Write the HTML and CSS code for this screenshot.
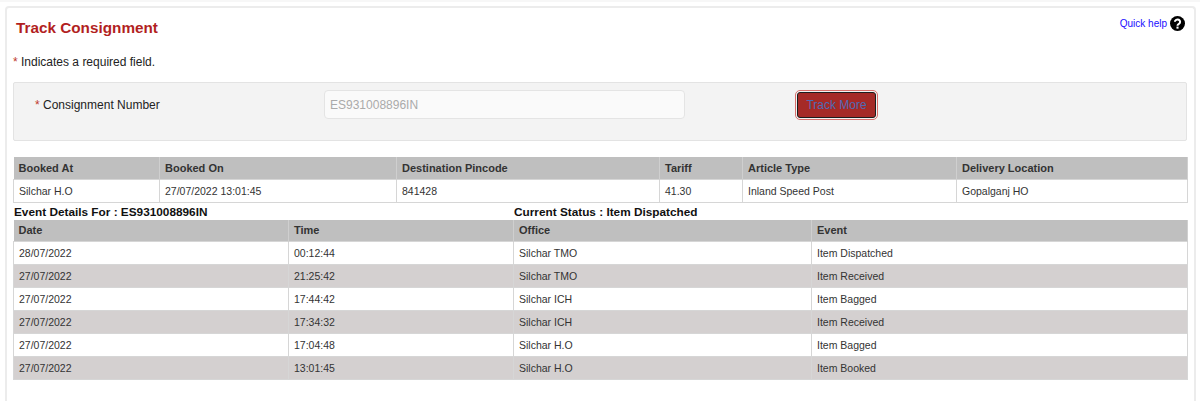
FILE: index.html
```html
<!DOCTYPE html>
<html lang="en">

<head>
  <meta charset="UTF-8">
  <title>Track Consignment</title>
  <link rel="stylesheet" href="styles.css">
</head>

<body>

  <div class="panel">
    <!-- Title and help link -->
    <div class="panel-head">
      <h1>Track Consignment</h1>
      <a class="help-link" href="#">Quick help
        <svg class="help-icon" width="15" height="15" viewBox="0 0 16 16">
          <circle cx="8" cy="8" r="8" fill="#000"></circle>
          <path d="M5.2 6.2a2.8 2.5 0 1 1 4.3 2.1c-1 .6-1.5 1-1.5 2.1" fill="none" stroke="#fff" stroke-width="2.1"></path>
          <rect x="6.9" y="11.3" width="2.2" height="2.2" fill="#fff"></rect>
        </svg>
      </a>
    </div>

    <p class="required-note"><span class="star">*</span> Indicates a required field.</p>

    <!-- Search form -->
    <div class="search-box">
      <label class="search-label" for="consignment"><span class="star">*</span> Consignment Number</label>
      <input class="search-input" id="consignment" type="text" value="ES931008896IN" disabled>
      <button class="track-btn">Track More</button>
    </div>

    <!-- Booking details -->
    <table class="data-table booking-table">
      <tr>
        <th>Booked At</th>
        <th>Booked On</th>
        <th>Destination Pincode</th>
        <th>Tariff</th>
        <th>Article Type</th>
        <th>Delivery Location</th>
      </tr>
      <tr>
        <td>Silchar H.O</td>
        <td>27/07/2022 13:01:45</td>
        <td>841428</td>
        <td>41.30</td>
        <td>Inland Speed Post</td>
        <td>Gopalganj HO</td>
      </tr>
    </table>

    <div class="event-title">
      <span class="event-for">Event Details For : ES931008896IN</span>
      <span>Current Status : Item Dispatched</span>
    </div>

    <!-- Event history -->
    <table class="data-table event-table">
      <tr>
        <th>Date</th>
        <th>Time</th>
        <th>Office</th>
        <th>Event</th>
      </tr>
      <tr>
        <td>28/07/2022</td>
        <td>00:12:44</td>
        <td>Silchar TMO</td>
        <td>Item Dispatched</td>
      </tr>
      <tr>
        <td>27/07/2022</td>
        <td>21:25:42</td>
        <td>Silchar TMO</td>
        <td>Item Received</td>
      </tr>
      <tr>
        <td>27/07/2022</td>
        <td>17:44:42</td>
        <td>Silchar ICH</td>
        <td>Item Bagged</td>
      </tr>
      <tr>
        <td>27/07/2022</td>
        <td>17:34:32</td>
        <td>Silchar ICH</td>
        <td>Item Received</td>
      </tr>
      <tr>
        <td>27/07/2022</td>
        <td>17:04:48</td>
        <td>Silchar H.O</td>
        <td>Item Bagged</td>
      </tr>
      <tr>
        <td>27/07/2022</td>
        <td>13:01:45</td>
        <td>Silchar H.O</td>
        <td>Item Booked</td>
      </tr>
    </table>
  </div>

</body>

</html>
```

FILE: styles.css
```css
* {
  margin: 0;
  padding: 0;
  box-sizing: border-box;
}

body {
  font-family: 'Liberation Sans', Arial, sans-serif;
  background-color: #fff;
  color: #222;
  height: 401px;
  overflow: hidden;
  border-top: 2px solid #f7f7f7;
  padding: 4px 4px 0 5px;
}

/* Outer panel */
.panel {
  border: 2px solid #ececec;
  border-bottom: none;
  border-radius: 4px 4px 0 0;
  height: 395px;
  padding: 0 7px 0 6px;
}

.panel-head {
  display: flex;
  justify-content: space-between;
  height: 38px;
  padding-left: 3px;
}

.panel-head h1 {
  font-size: 15.3px;
  line-height: 19px;
  margin-top: 10px;
  color: #b21f1f;
}

.help-link {
  display: flex;
  align-items: center;
  gap: 3px;
  height: 15px;
  margin: 8px 2px 0 0;
  font-size: 10px;
  color: #1a0dff;
  text-decoration: none;
}

.required-note {
  font-size: 12px;
  line-height: 14px;
  margin-top: 9px;
  color: #222;
}

.star {
  color: #c0392b;
}

/* Search form */
.search-box {
  display: flex;
  align-items: flex-start;
  height: 59px;
  margin-top: 13px;
  padding-top: 7px;
  background-color: #f3f3f3;
  border: 1px solid #e3e3e3;
  border-radius: 2px;
}

.search-label {
  width: 310px;
  padding: 8px 0 0 21px;
  font-size: 12px;
  line-height: 14px;
}

.search-input {
  width: 361px;
  height: 29px;
  padding: 0 5px;
  font-family: inherit;
  font-size: 12px;
  color: #aaa;
  background-color: #fafafa;
  border: 1px solid #e4e4e4;
  border-radius: 4px;
}

.track-btn {
  width: 79px;
  height: 26px;
  margin: 2px 0 0 112px;
  font-family: inherit;
  font-size: 12px;
  color: #4f6bb5;
  background-color: #a52a27;
  border: 1px solid #1c1c1c;
  border-radius: 3px;
  outline: 1px solid #d9706c;
  outline-offset: 1px;
}

/* Tables */
.data-table {
  width: 1175px;
  border-collapse: collapse;
  table-layout: fixed;
  font-size: 10.5px;
}

.data-table th {
  height: 22px;
  padding: 0 5px;
  font-size: 11px;
  text-align: left;
  color: #333;
  background-color: #bfbfbf;
  border-right: 1px solid #cfcfcf;
}

.data-table td {
  height: 23px;
  padding: 0 5px;
  color: #333;
  border: 1px solid #d6d6d6;
}

.booking-table {
  margin-top: 16px;
}

.booking-table th:nth-child(1) { width: 146px; }
.booking-table th:nth-child(2) { width: 237px; }
.booking-table th:nth-child(3) { width: 263px; }
.booking-table th:nth-child(4) { width: 83px; }
.booking-table th:nth-child(5) { width: 214px; }

.event-table th:nth-child(1) { width: 275px; }
.event-table th:nth-child(2) { width: 225px; }
.event-table th:nth-child(3) { width: 298px; }

.event-table tr:nth-child(odd) td {
  background-color: #d4d0d0;
}

.event-title {
  display: flex;
  height: 17px;
  padding-left: 1px;
  font-size: 11.8px;
  line-height: 18px;
  font-weight: bold;
  color: #111;
}

.event-for {
  width: 500px;
}
```
